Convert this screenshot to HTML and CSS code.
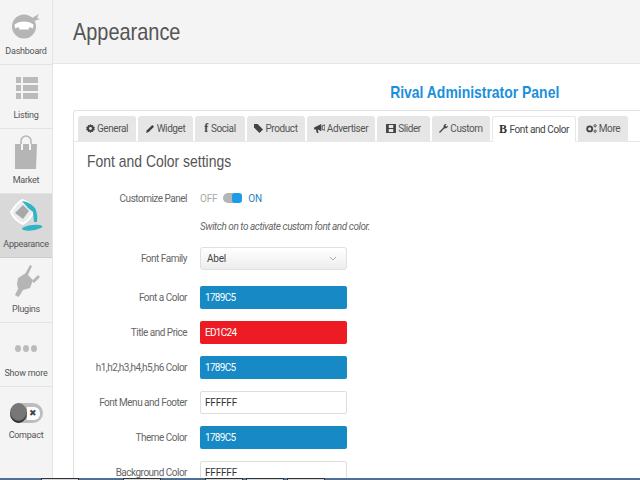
FILE: index.html
```html
<!DOCTYPE html>
<html lang="en">
<head>
<meta charset="utf-8">
<title>Appearance</title>
<link rel="stylesheet" href="styles.css">
</head>
<body>
<div class="app">
  <nav class="side">
    <a class="nav">
      <svg class="ic" width="30" height="30" viewBox="0 0 30 30"><circle cx="13" cy="16.500" r="12" fill="#b5b5b5"/><path d="M3.500 14.500q4-3 9.500-3t9.500 3l-.5 4-3.500-1.500-1 2.500h-9l-1-2.500-3.500 1.500z" fill="#fff"/><path d="M21 8l7-4-2 4 3 1-6 2z" fill="#b5b5b5"/></svg>
      <span>Dashboard</span>
    </a>
    <a class="nav">
      <svg class="ic" width="30" height="30" viewBox="0 0 30 30"><path d="M5 3h5v6H5zM12 3h15v6H12zM5 11h5v6H5zM12 11h15v6H12zM5 19h5v6H5zM12 19h15v6H12z" fill="#bbb"/></svg>
      <span>Listing</span>
    </a>
    <a class="nav">
      <svg class="ic" width="30" height="34" viewBox="0 0 30 34"><path d="M4 9h6v6h2V9h6v6h2V9h6l-1 25H4z" fill="#b5b5b5"/><path d="M10 9V6a5 5 0 0 1 10 0v3" fill="none" stroke="#b5b5b5" stroke-width="1.500"/></svg>
      <span>Market</span>
    </a>
    <a class="nav active">
      <svg class="ic" width="34" height="36" viewBox="0 0 34 36"><path d="M2 15Q8 6 13 3q8 2 12 11-3 8-11 13Q5 23 2 15z" fill="#ececec" stroke="#fff" stroke-width="2"/><path d="M6 16l8-8 6 6-6 8z" fill="#a8a8a8"/><path d="M13 4q8 1 13 7 3 6 2 14h-3l-1-10-5-4z" fill="#2eb4c4"/><path d="M13 31q8-4 18-3 4 1 1 3-9 4-18 2z" fill="#2eb4c4"/></svg>
      <span>Appearance</span>
    </a>
    <a class="nav">
      <svg class="ic" width="30" height="34" viewBox="0 0 30 34"><path d="M7 14l8-5 7 7-3 8-7 2-3 5-2 2-3-2 3-6-1-5z" fill="#b5b5b5"/><path d="M14 10l5-9 2 1-4 9zM21 17l6-6 2 2-6 6z" fill="#b5b5b5"/></svg>
      <span>Plugins</span>
    </a>
    <a class="nav more">
      <span class="dots"><i></i><i></i><i></i></span>
      <span>Show more</span>
    </a>
    <a class="nav compact">
      <span class="cswitch"><b></b><em>✖</em></span>
      <span>Compact</span>
    </a>
  </nav>
  <main class="main">
    <header class="top"><h1>Appearance</h1></header>
    <section class="content">
      <div class="brand"><h2>Rival Administrator Panel</h2></div>
      <div class="panel">
        <ul class="tabs">
          <li class="t-general"><svg width="9" height="9" viewBox="0 0 10 10"><path d="M5 0l1 1.500 1.800-.4.300 1.800 1.800.400-.7 1.700.7 1.700-1.800.4-.3 1.800L6 8.500 5 10 4 8.500l-1.800.4-.3-1.800L.1 6.700.8 5 .1 3.300l1.800-.4.300-1.800L4 1.500z" fill="#444"/><circle cx="5" cy="5" r="1.600" fill="#e6e6e6"/></svg>General</li>
          <li class="t-widget"><svg width="9" height="9" viewBox="0 0 10 10"><path d="M0 10l1-3 6-6 2 2-6 6z" fill="#444"/></svg>Widget</li>
          <li class="t-social"><b class="f">f</b>Social</li>
          <li class="t-product"><svg width="9" height="9" viewBox="0 0 10 10"><path d="M0 0h4l6 6-4 4-6-6z" fill="#444"/></svg>Product</li>
          <li class="t-adv"><svg width="11" height="9" viewBox="0 0 12 10"><path d="M0 4l8-4v8L4 6l1 4H3L2 6H0z" fill="#444"/><path d="M9 2l3-1v6L9 6z" fill="none" stroke="#444"/></svg>Advertiser</li>
          <li class="t-slider"><svg width="10" height="9" viewBox="0 0 11 10"><path fill-rule="evenodd" d="M0 0h11v10H0zM3 1v3.500h5V1zM3 5.500V9h5V5.500z" fill="#444"/></svg>Slider</li>
          <li class="t-custom"><svg width="9" height="9" viewBox="0 0 10 10"><path d="M0 9l5-5q-.5-3 2-4 1 0 1.500.2L7 2l1 1 1.800-1.400Q10 5 6 5l-5 5z" fill="#444"/></svg>Custom</li>
          <li class="t-font on"><b class="bold">B</b>Font and Color</li>
          <li class="t-more"><svg width="11" height="9" viewBox="0 0 12 10"><circle cx="4" cy="5.500" r="2.800" fill="none" stroke="#444" stroke-width="2"/><circle cx="10" cy="2" r="1.300" fill="none" stroke="#444"/><circle cx="10" cy="8" r="1.300" fill="none" stroke="#444"/></svg>More</li>
        </ul>
        <div class="body">
          <div class="subhead"><h3>Font and Color settings</h3></div>
          <div class="row r-toggle">
            <label>Customize Panel</label>
            <div class="ctl toggle"><span class="off">OFF</span><span class="sw"><i></i></span><span class="onl">ON</span></div>
          </div>
          <p class="hint">Switch on to activate custom font and color.</p>
          <div class="row r-sel">
            <label>Font Family</label>
            <div class="ctl select"><span>Abel</span><svg width="8" height="5" viewBox="0 0 8 5"><path d="M1 1l3 3 3-3" fill="none" stroke="#aaa"/></svg></div>
          </div>
          <div class="row"><label>Font a Color</label><div class="ctl color blue">1789C5</div></div>
          <div class="row"><label>Title and Price</label><div class="ctl color red">ED1C24</div></div>
          <div class="row"><label>h1,h2,h3,h4,h5,h6 Color</label><div class="ctl color blue">1789C5</div></div>
          <div class="row"><label>Font Menu and Footer</label><div class="ctl color white">FFFFFF</div></div>
          <div class="row"><label>Theme Color</label><div class="ctl color blue">1789C5</div></div>
          <div class="row"><label>Background Color</label><div class="ctl color white">FFFFFF</div></div>
        </div>
      </div>
    </section>
  </main>
</div>
<div class="taskbar"><i></i><i class="gap"></i><i class="gap"></i><i></i><i></i></div>
</body>
</html>
```
FILE: styles.css
```css
* { box-sizing: border-box; }
html, body { margin: 0; height: 100%; overflow: hidden; }
body { font-family: Roboto, "Liberation Sans", Arial, sans-serif; background: #fff; color: #555; position: relative; }
.app { display: flex; height: 480px; }
.side { width: 53px; flex: none; background: #f4f4f4; border-right: 1px solid #e4e4e4; display: flex; flex-direction: column; }
.nav { height: 64.500px; display: flex; flex-direction: column; align-items: center; justify-content: flex-end; padding-bottom: 8px; border-bottom: 1px solid #e3e3e3; font-size: 9px; letter-spacing: -.25px; line-height: 10px; color: #555; flex: none; }
.nav .ic { display: block; margin-bottom: 6px; }
.nav.active { background: #d9d9d9; border-bottom: 1px solid #ccc; }
.dots { display: flex; gap: 2px; margin-bottom: 16px; }
.dots i { width: 6px; height: 7px; border-radius: 50%; background: #bbb; }
.nav.compact { border-bottom: 0; height: 60px; padding-bottom: 7px; }
.cswitch { width: 33px; height: 20px; border-radius: 10px; background: #bdbdbd; display: flex; align-items: center; justify-content: space-between; padding-right: 3px; margin-bottom: 7px; }
.cswitch b { width: 17px; height: 20px; border-radius: 50%; background: #777; box-shadow: inset 0 -2px 1px #333; }
.cswitch em { font-style: normal; font-size: 9px; line-height: 13px; width: 13px; background: #fff; color: #444; border-radius: 0 6px 6px 0; text-align: center; letter-spacing: 0; }
.main { flex: 1; min-width: 0; }
.top { height: 64px; background: #f4f4f4; border-bottom: 1px solid #e6e6e6; padding: 17px 20px 0; }
h1 { margin: 0; font: 400 24px/30px "Liberation Sans", Arial, sans-serif; color: #555; display: inline-block; transform: scaleX(.83); transform-origin: left center; }
.content { padding: 0 0 0 20px; }
.brand { height: 46px; padding: 19px 81px 0 0; text-align: right; }
.brand h2 { margin: 0; font: 700 17px/18px "Liberation Sans", Arial, sans-serif; color: #1b8fdc; display: inline-block; transform: scaleX(.82); transform-origin: right center; }
.panel { border: 1px solid #e2e2e2; border-right: 0; border-bottom: 0; border-radius: 3px 0 0 0; width: 600px; }
.tabs { list-style: none; margin: 0; padding: 5px 0 0 4px; display: flex; gap: 2px; border-bottom: 1px solid #e8e8e8; height: 31px; }
.tabs li { height: 25px; flex: none; display: flex; align-items: center; justify-content: center; gap: 2px; font-size: 10px; letter-spacing: -.4px; color: #555; background: #e6e6e6; border-radius: 3px 3px 0 0; white-space: nowrap; }
.tabs li.on { background: #fff; border: 1px solid #e8e8e8; border-bottom: 0; margin-bottom: -1px; height: 26px; color: #444; }
.t-general { width: 58px; }
.t-widget { width: 55px; }
.t-social { width: 50px; }
.t-product { width: 58px; }
.t-adv { width: 68px; }
.t-slider { width: 53px; }
.t-custom { width: 58px; }
.t-font { width: 84px; }
.t-more { width: 50px; }
.f { font-family: "Liberation Serif", serif; font-size: 12px; margin-right: 1px; color: #444; }
.bold { font-family: "Liberation Serif", serif; font-size: 12px; margin-right: 1px; color: #333; }
.body { padding: 0 0 0 13px; }
.subhead { height: 49px; padding-top: 10px; }
h3 { margin: 0; font: 400 17px/18px "Liberation Sans", Arial, sans-serif; color: #555; display: inline-block; transform: scaleX(.82); transform-origin: left center; white-space: nowrap; }
.row { display: flex; align-items: center; height: 23px; margin-bottom: 12px; }
.row label { width: 100px; margin-right: 13px; flex: none; font-size: 10px; letter-spacing: -.5px; color: #666; white-space: nowrap; display: flex; justify-content: flex-end; }
.ctl { width: 147px; height: 23px; font-size: 10px; letter-spacing: -.2px; }
.r-toggle { height: 14px; margin: 0; }
.toggle { display: flex; align-items: center; gap: 6px; height: 14px; }
.off { color: #aaa; }
.onl { color: #2a7fc0; }
.sw { width: 19px; height: 10px; border-radius: 5px; background: #b5b5b5; position: relative; }
.sw i { position: absolute; right: 0; top: 0; width: 10px; height: 10px; border-radius: 3px; background: #1b9bea; }
.hint { margin: 16px 0 0 113px; font-size: 10px; letter-spacing: -.45px; line-height: 12px; height: 12px; font-style: italic; color: #666; }
.r-sel { margin: 14px 0 16px; }
.select { border: 1px solid #e0e0e0; border-radius: 3px; background: linear-gradient(#fff, #ededed); display: flex; align-items: center; justify-content: space-between; padding: 0 9px 0 6px; color: #444; }
.color { border-radius: 2px; display: flex; align-items: center; padding: 0 5px; }
.blue { background: #1789c5; color: #fff; letter-spacing: -.7px; }
.red { background: #ed1c24; color: #fff; letter-spacing: -.7px; }
.white { background: #fff; color: #333; border: 1px solid #dedede; padding: 0 4px; }
.taskbar { position: absolute; left: 0; right: 0; bottom: 0; height: 2px; background: #4f6f94; display: flex; padding-left: 41px; gap: 3px; }
.taskbar i { width: 38px; background: #cfd6de; border: 1px solid #333; border-bottom: 0; }
.taskbar i.gap { margin-left: 41px; }
```
